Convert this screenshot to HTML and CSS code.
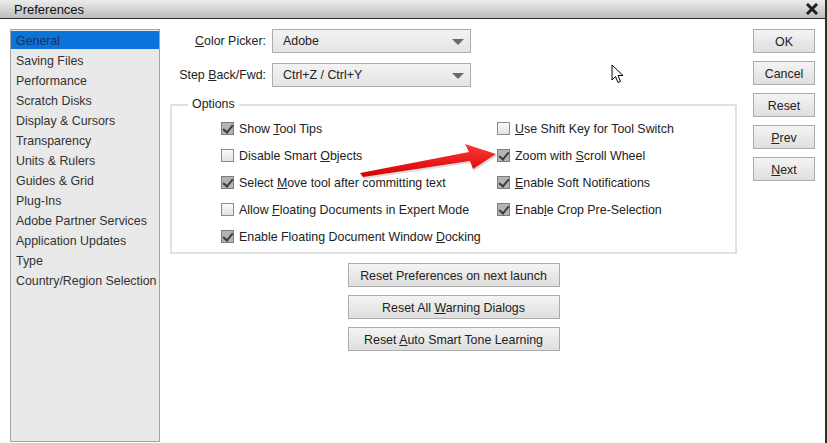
FILE: index.html
```html
<!DOCTYPE html>
<html lang="en">
<head>
    <meta charset="UTF-8">
    <title>Preferences</title>
    <link rel="stylesheet" href="styles.css">
</head>
<body>
    <div class="window">
        <div class="titlebar">
            <span class="title">Preferences</span>
            <svg class="close" width="12" height="12" viewBox="0 0 12 12">
                <path d="M2 2 L10 10 M10 2 L2 10" stroke="#1e1e1e" stroke-width="3" stroke-linecap="square"/>
            </svg>
        </div>

        <div class="main">
            <ul class="nav">
                <li class="selected">General</li>
                <li>Saving Files</li>
                <li>Performance</li>
                <li>Scratch Disks</li>
                <li>Display &amp; Cursors</li>
                <li>Transparency</li>
                <li>Units &amp; Rulers</li>
                <li>Guides &amp; Grid</li>
                <li>Plug-Ins</li>
                <li>Adobe Partner Services</li>
                <li>Application Updates</li>
                <li>Type</li>
                <li>Country/Region Selection</li>
            </ul>

            <div class="center">
                <div class="field">
                    <label><u>C</u>olor Picker:</label>
                    <div class="select">Adobe<span class="caret"></span></div>
                </div>
                <div class="field">
                    <label>Step <u>B</u>ack/Fwd:</label>
                    <div class="select">Ctrl+Z / Ctrl+Y<span class="caret"></span></div>
                </div>

                <fieldset class="options">
                    <legend>Options</legend>
                    <div class="cols">
                        <div class="col left">
                            <div class="check"><span class="box on"></span><span>Show <u>T</u>ool Tips</span></div>
                            <div class="check"><span class="box"></span><span>Disable Smart <u>O</u>bjects</span></div>
                            <div class="check"><span class="box on"></span><span>Select <u>M</u>ove tool after committing text</span></div>
                            <div class="check"><span class="box"></span><span>Allow <u>F</u>loating Documents in Expert Mode</span></div>
                            <div class="check"><span class="box on"></span><span>Enable Floating Document Window <u>D</u>ocking</span></div>
                        </div>
                        <div class="col">
                            <div class="check"><span class="box"></span><span><u>U</u>se Shift Key for Tool Switch</span></div>
                            <div class="check"><span class="box on"></span><span>Zoom with <u>S</u>croll Wheel</span></div>
                            <div class="check"><span class="box on"></span><span><u>E</u>nable Soft Notifications</span></div>
                            <div class="check"><span class="box on"></span><span>Enab<u>l</u>e Crop Pre-Selection</span></div>
                        </div>
                    </div>
                </fieldset>

                <div class="resets">
                    <button class="btn wide">Reset Preferences on next launch</button>
                    <button class="btn wide">Reset All <u>W</u>arning Dialogs</button>
                    <button class="btn wide">Reset <u>A</u>uto Smart Tone Learning</button>
                </div>
            </div>

            <div class="actions">
                <button class="btn">OK</button>
                <button class="btn">Cancel</button>
                <button class="btn">Reset</button>
                <button class="btn"><u>P</u>rev</button>
                <button class="btn"><u>N</u>ext</button>
            </div>
        </div>

        <!-- annotation arrow drawn over the dialog -->
        <svg class="arrow" width="150" height="50" viewBox="0 0 150 50">
            <defs>
                <linearGradient id="red" x1="0" y1="0" x2="0" y2="1">
                    <stop offset="0" stop-color="#ff3b3b"/>
                    <stop offset="1" stop-color="#d40000"/>
                </linearGradient>
            </defs>
            <polygon points="3,37 112,16 108,8 139,18 116,33 113,25 6,41" fill="#b9b9b9" opacity="0.5" transform="translate(1,2)"/>
            <polygon points="3,37 112,16 108,8 139,18 116,33 113,25 6,41" fill="url(#red)"/>
        </svg>

        <svg class="cursor" width="13" height="20" viewBox="0 0 13 20">
            <path d="M1 1 L1 16 L4.5 12.5 L7 18.5 L9.5 17.5 L7 11.5 L12 11.5 Z" fill="#fff" stroke="#000" stroke-width="1" stroke-linejoin="round"/>
        </svg>
    </div>
</body>
</html>
```

FILE: styles.css
```css
body {
    margin: 0;
    background: #2c2c2c;
    font-family: "Liberation Sans", Arial, sans-serif;
    font-size: 12.4px;
    color: #222;
}
.window {
    position: relative;
    width: 825px;
    height: 443px;
    background: #fff;
    overflow: hidden;
}
.titlebar {
    height: 18px;
    display: flex;
    align-items: center;
    justify-content: space-between;
    padding: 0 7px 0 14px;
    background: linear-gradient(#ececec, #bdbdbd);
    border-bottom: 1px solid #2a2a2a;
}
.title {
    font-size: 13px;
    color: #111;
}
.main {
    display: flex;
    align-items: flex-start;
    padding: 10px 0 0 10px;
}
.nav {
    list-style: none;
    margin: 0;
    padding: 1px 0 0;
    width: 148px;
    height: 410px;
    background: #e9e9e9;
    border: 1px solid #a3a3a3;
}
.nav li {
    height: 20px;
    line-height: 21px;
    padding-left: 5px;
    color: #333;
    white-space: nowrap;
}
.nav .selected {
    height: 18px;
    margin-bottom: 2px;
    background: #0a74da;
    color: #203050;
}
.center {
    width: 567px;
    margin-left: 10px;
}
.field {
    display: flex;
    align-items: center;
    margin-bottom: 10px;
}
.field label {
    width: 96px;
    text-align: right;
    margin-right: 6px;
    white-space: nowrap;
}
.select {
    position: relative;
    box-sizing: border-box;
    width: 199px;
    height: 24px;
    line-height: 23px;
    padding-left: 10px;
    border: 1px solid #acacac;
    background: linear-gradient(#f3f3f3, #e4e4e4);
}
.caret {
    position: absolute;
    right: 6px;
    top: 9px;
    border-left: 6px solid transparent;
    border-right: 6px solid transparent;
    border-top: 6px solid #6a6a6a;
}
.options {
    margin: -1px 0 0;
    padding: 2px 0 2px 49px;
    border: 2px solid #e2e2e2;
    min-width: 0;
}
.options legend {
    margin-left: -33px;
    padding: 0 4px;
    line-height: 17px;
}
.cols {
    display: flex;
}
.col.left {
    width: 276px;
}
.check {
    display: flex;
    align-items: center;
    gap: 5px;
    height: 27px;
    white-space: nowrap;
}
.box {
    position: relative;
    box-sizing: border-box;
    width: 13px;
    height: 13px;
    border: 1px solid #8c8c8c;
    background: linear-gradient(#fafafa, #e2e2e2);
    flex: none;
}
.box.on {
    background: #b4b4b4;
    border-color: #7d7d7d;
}
.box.on::after {
    content: "";
    position: absolute;
    left: 3px;
    top: 0px;
    width: 4px;
    height: 8px;
    border-right: 2px solid #3c3c3c;
    border-bottom: 2px solid #3c3c3c;
    transform: rotate(40deg);
}
.resets {
    display: flex;
    flex-direction: column;
    align-items: center;
    gap: 8px;
    margin-top: 9px;
}
.btn {
    box-sizing: border-box;
    width: 62px;
    height: 24px;
    padding: 1px 0 0;
    font-family: inherit;
    font-size: 12.4px;
    color: #222;
    border: 1px solid #acacac;
    border-radius: 0;
    background: linear-gradient(#f4f4f4, #dedede);
}
.btn.wide {
    width: 212px;
}
.actions {
    display: flex;
    flex-direction: column;
    gap: 8px;
    margin-left: 16px;
}
.arrow {
    position: absolute;
    left: 357px;
    top: 136px;
}
.cursor {
    position: absolute;
    left: 611px;
    top: 64px;
}
```
